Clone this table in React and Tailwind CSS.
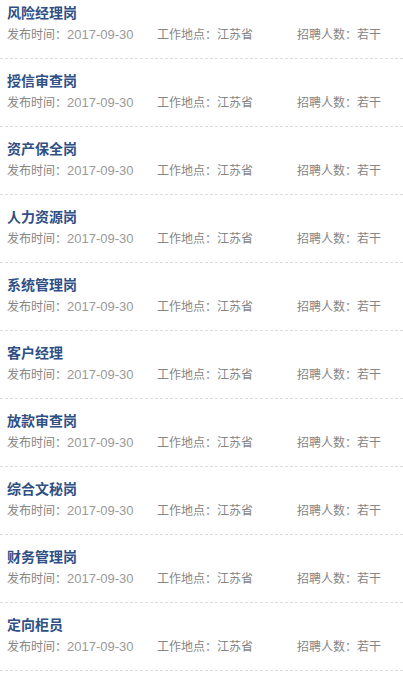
const jobs = [
    '风险经理岗',
    '授信审查岗',
    '资产保全岗',
    '人力资源岗',
    '系统管理岗',
    '客户经理',
    '放款审查岗',
    '综合文秘岗',
    '财务管理岗',
    '定向柜员',
];

const App = () => {
    return (
        <div className="w-full min-h-screen bg-white overflow-hidden" style={{ fontFamily: '"Liberation Sans", "Noto Sans CJK SC", sans-serif' }}>
            <ul className="-mt-[9px]">
                {jobs.map((titulo) => (
                    <li key={titulo} className="pl-[7px] pt-[12px] pb-[13px] border-b border-dashed border-[#dcdcdc]">
                        <a href="#" className="block text-[14px] leading-[20px] font-bold text-[#2f4f85]">{titulo}</a>
                        <div className="flex mt-[2px] text-[12px] leading-[20px] text-[#858585]">
                            <span className="w-[150px]">发布时间：<span className="text-[13px] text-[#9a9a9a]">2017-09-30</span></span>
                            <span className="w-[140px]">工作地点：江苏省</span>
                            <span>招聘人数：若干</span>
                        </div>
                    </li>
                ))}
            </ul>
        </div>
    );
};

export default App;
